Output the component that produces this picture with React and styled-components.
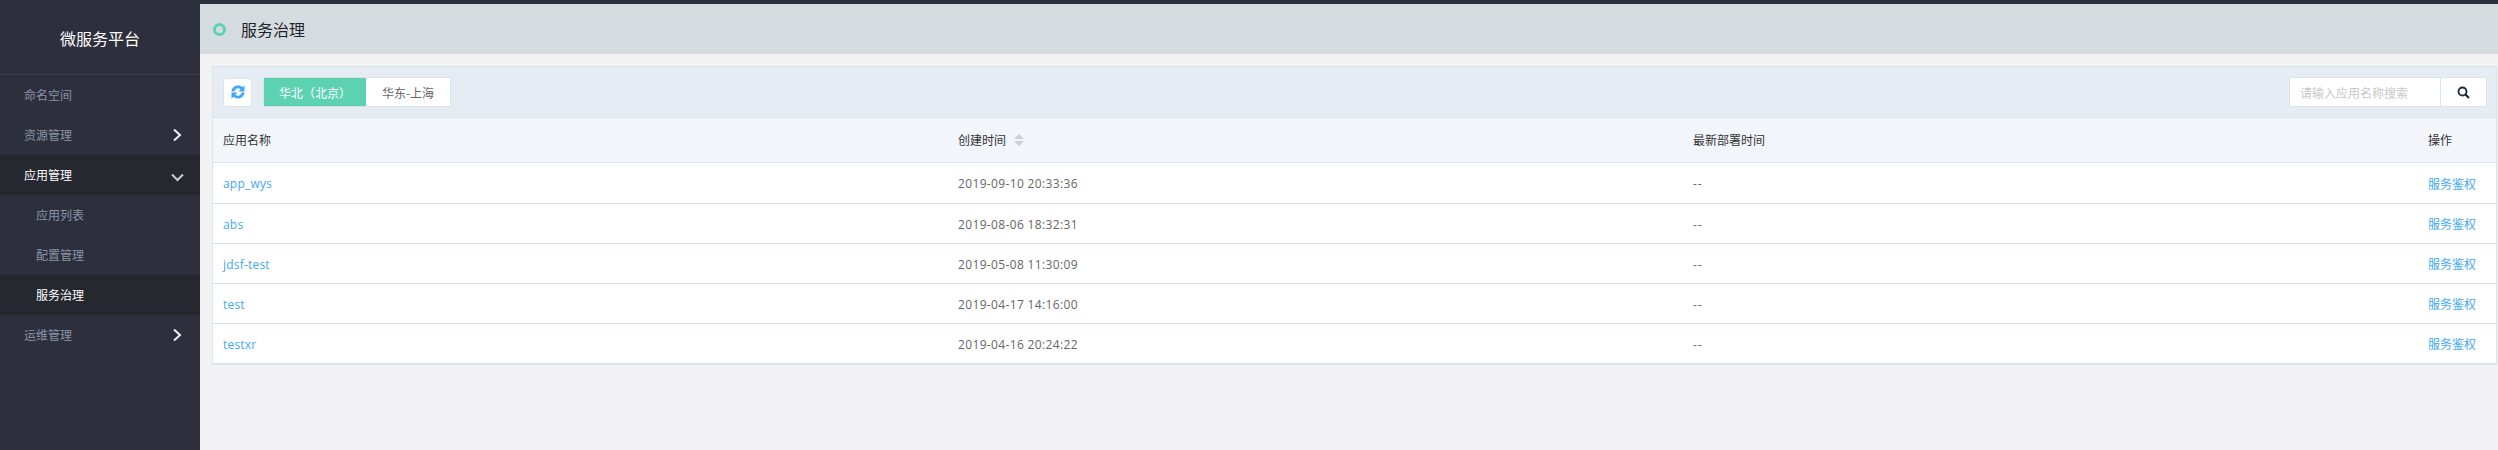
import React from "react";
import styled, { createGlobalStyle } from "styled-components";

const Global = createGlobalStyle`
  html, body { margin: 0; padding: 0; height: 100%; background: #f2f2f4; }
  body { font-family: "Open Sans", "Noto Sans CJK SC", sans-serif; font-size: 12px; }
  * { box-sizing: border-box; }
`;

const Page = styled.div`
  display: flex; width: 2498px; height: 450px; overflow: hidden; background: #2d303c;
`;
const Sidebar = styled.aside`
  width: 200px; flex: none; background: #2d303c; display: flex; flex-direction: column;
`;
const Logo = styled.div`
  height: 75px; padding-top: 1px; border-bottom: 1px solid #3a3d49; color: #fff; font-size: 16px;
  display: flex; align-items: center; justify-content: center;
`;
const MenuItem = styled.div`
  height: 40px; display: flex; align-items: center; justify-content: space-between;
  padding: 0 16px 0 ${p => (p.$sub ? 36 : 24)}px;
  font-size: 12px;
  color: ${p => (p.$active ? "#fff" : "#8a93a8")};
  background: ${p => (p.$active ? "#262830" : "transparent")};
`;
const Main = styled.main`
  flex: 1; margin-top: 4px; background: #f2f2f4; display: flex; flex-direction: column; min-width: 0;
`;
const TitleBar = styled.header`
  height: 50px; flex: none; background: #d5dcdf; display: flex; align-items: center; padding-left: 13px; gap: 15px;
`;
const Dot = styled.span`
  width: 13px; height: 13px; margin-top: 1px; border-radius: 50%; border: 3px solid #5dd2b1; flex: none;
`;
const Title = styled.h1`
  margin: 0; font-size: 16px; font-weight: 400; color: #1f2329;
`;
const Card = styled.section`
  margin: 12px 1px 0 12px; border: 1px solid #dbe3ec; background: #fff;
`;
const Toolbar = styled.div`
  height: 51px; background: #e6ecf4; border-bottom: 1px solid #dbe3ec;
  display: flex; align-items: center; padding: 0 9px 0 10px;
`;
const RefreshBtn = styled.button`
  width: 29px; height: 29px; padding: 0; background: #fff; border: 1px solid #dbe3ec; border-radius: 3px;
  display: flex; align-items: center; justify-content: center; margin-right: 11px; color: #3ea6fb;
`;
const Tabs = styled.div`
  display: flex; height: 30px; border: 1px solid #dbe3ec; background: #fff;
`;
const Tab = styled.div`
  width: ${p => (p.$active ? 102 : 84)}px; display: flex; align-items: center; justify-content: center;
  font-family: "Noto Sans CJK SC", sans-serif; font-size: 12px;
  background: ${p => (p.$active ? "#5dd2b1" : "#fff")};
  color: ${p => (p.$active ? "#fff" : "#666")};
`;
const Search = styled.div`
  margin-left: auto; display: flex; width: 198px; height: 30px; border: 1px solid #dbe3ec; background: #fff;
`;
const SearchInput = styled.input`
  width: 151px; border: 0; border-right: 1px solid #dbe3ec; outline: 0; padding: 0 10px; font-size: 12px;
  font-family: "Noto Sans CJK SC", sans-serif; color: #333; background: #fff;
  &::placeholder { color: #c8c8c8; opacity: 1; }
`;
const SearchBtn = styled.div`
  flex: 1; display: flex; align-items: center; justify-content: center;
`;
const Row = styled.div`
  display: grid; grid-template-columns: 735px 735px 735px 1fr;
  height: ${p => (p.$head ? 45 : p.$first ? 41 : 40)}px; padding-left: 10px; align-items: center;
  padding-top: ${p => (p.$head ? 0 : 1)}px;
  background: ${p => (p.$head ? "#f2f6fb" : "#fff")};
  border-bottom: 1px solid #dbe3ec;
  color: ${p => (p.$head ? "#333" : "#666")};
`;
const HeadLabel = styled.span`
  display: inline-flex; align-items: center; gap: 8px;
`;
const Link = styled.a`
  color: #42a9f5; text-decoration: none;
`;
const NameLink = styled(Link)`
  letter-spacing: 0.2px;
`;
const DateCell = styled.span`
  letter-spacing: 0.35px;
`;
const EmptyCell = styled.span`
  letter-spacing: 1px;
`;

const Chevron = ({ down }) => (
  <svg width="14" height="14" viewBox="0 0 14 14" fill="none" stroke={down ? "#c9ccd3" : "#f2f3f5"} strokeWidth="2">
    <path d={down ? "M2 6.5 7.5 12 13 6.5" : "M4 1.5 10 7 4 12.5"} />
  </svg>
);
const RefreshArc = "M.3 6C.9 2.5 3.4.4 6.5.4c1.7 0 3.1.6 4.2 1.6L12.5.3V6H7l2-2C8.3 3.4 7.5 3 6.5 3 5 3 3.8 4 3.2 6z";
const RefreshIcon = () => (
  <svg width="14" height="14" viewBox="0 0 13 13" fill="currentColor">
    <path d={RefreshArc} />
    <path d={RefreshArc} transform="rotate(180 6.5 6.5)" />
  </svg>
);
const SearchIcon = () => (
  <svg width="13" height="13" viewBox="0 0 13 13" fill="none" stroke="#1f2a36" strokeWidth="1.8">
    <circle cx="5.5" cy="5.5" r="4" />
    <path d="M8.5 8.5 12 12" strokeWidth="2.2" />
  </svg>
);
const SortIcon = () => (
  <svg width="10" height="12" viewBox="0 0 10 12" fill="#cfcfd2">
    <path d="M5 0 10 5H0zM5 12 0 7h10z" />
  </svg>
);

const menu = [
  { label: "命名空间" },
  { label: "资源管理", icon: "right" },
  { label: "应用管理", icon: "down", active: true },
  { label: "应用列表", sub: true },
  { label: "配置管理", sub: true },
  { label: "服务治理", sub: true, active: true },
  { label: "运维管理", icon: "right" },
];
const apps = [
  ["app_wys", "2019-09-10 20:33:36"],
  ["abs", "2019-08-06 18:32:31"],
  ["jdsf-test", "2019-05-08 11:30:09"],
  ["test", "2019-04-17 14:16:00"],
  ["testxr", "2019-04-16 20:24:22"],
];

export default function App() {
  return (
    <Page>
      <Global />
      <Sidebar>
        <Logo>微服务平台</Logo>
        {menu.map(m => (
          <MenuItem key={m.label} $sub={m.sub} $active={m.active}>
            {m.label}
            {m.icon && <Chevron down={m.icon === "down"} />}
          </MenuItem>
        ))}
      </Sidebar>
      <Main>
        <TitleBar>
          <Dot />
          <Title>服务治理</Title>
        </TitleBar>
        <Card>
          <Toolbar>
            <RefreshBtn aria-label="刷新"><RefreshIcon /></RefreshBtn>
            <Tabs>
              <Tab $active>华北（北京）</Tab>
              <Tab>华东-上海</Tab>
            </Tabs>
            <Search>
              <SearchInput placeholder="请输入应用名称搜索" />
              <SearchBtn><SearchIcon /></SearchBtn>
            </Search>
          </Toolbar>
          <Row $head>
            <span>应用名称</span>
            <HeadLabel>创建时间<SortIcon /></HeadLabel>
            <span>最新部署时间</span>
            <span>操作</span>
          </Row>
          {apps.map(([name, time], i) => (
            <Row key={name} $first={i === 0}>
              <NameLink>{name}</NameLink>
              <DateCell>{time}</DateCell>
              <EmptyCell>--</EmptyCell>
              <Link>服务鉴权</Link>
            </Row>
          ))}
        </Card>
      </Main>
    </Page>
  );
}
